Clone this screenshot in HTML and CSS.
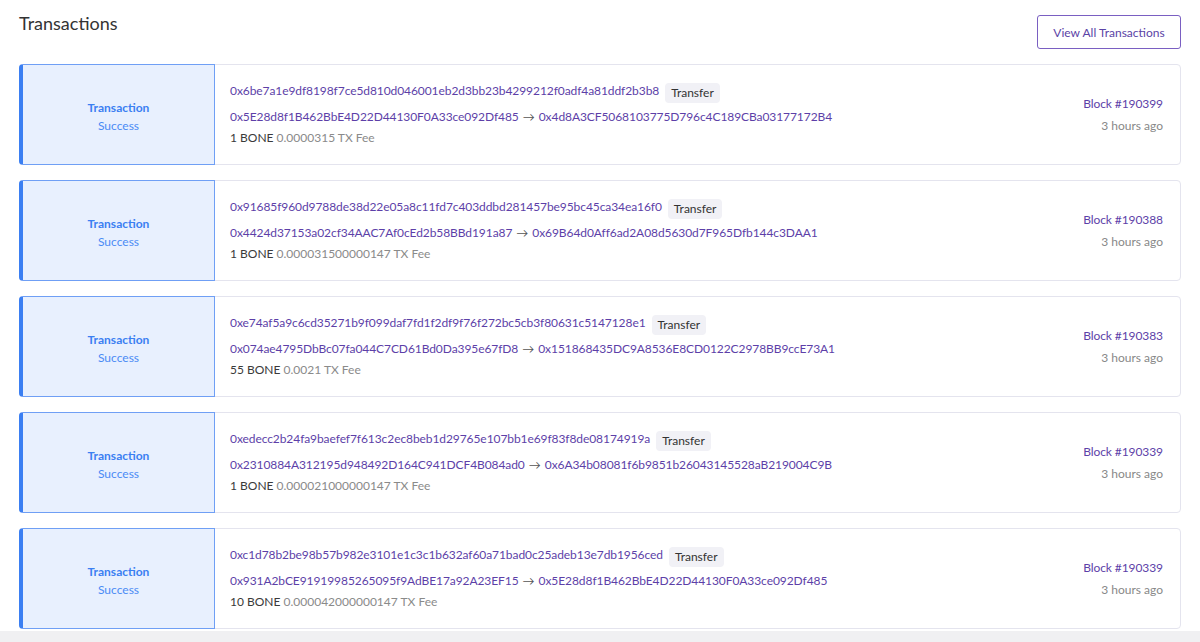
FILE: index.html
```html
<!DOCTYPE html>
<html lang="en">
<head>
    <meta charset="UTF-8">
    <meta name="viewport" content="width=device-width, initial-scale=1.0">
    <title>Transactions</title>
    <link rel="stylesheet" href="styles.css">
</head>
<body>
    <div class="page">
        <div class="header">
            <h2 class="title">Transactions</h2>
            <a class="view-all" href="#">View All Transactions</a>
        </div>

        <div class="tx-list">
            <div class="tx-card">
                <div class="tx-status">
                    <span class="status-type">Transaction</span>
                    <span class="status-result">Success</span>
                </div>
                <div class="tx-info">
                    <div class="tx-hash-line">
                        <a class="link" href="#">0x6be7a1e9df8198f7ce5d810d046001eb2d3bb23b4299212f0adf4a81ddf2b3b8</a>
                        <span class="badge">Transfer</span>
                    </div>
                    <div class="tx-addr-line">
                        <a class="link" href="#">0x5E28d8f1B462BbE4D22D44130F0A33ce092Df485</a>
                        <span class="arrow">&rarr;</span>
                        <a class="link" href="#">0x4d8A3CF5068103775D796c4C189CBa03177172B4</a>
                    </div>
                    <div class="tx-fee-line">
                        <span class="amount">1 BONE</span>
                        <span class="fee">0.0000315 TX Fee</span>
                    </div>
                </div>
                <div class="tx-meta">
                    <a class="link" href="#">Block #190399</a>
                    <span class="time">3 hours ago</span>
                </div>
            </div>

            <div class="tx-card">
                <div class="tx-status">
                    <span class="status-type">Transaction</span>
                    <span class="status-result">Success</span>
                </div>
                <div class="tx-info">
                    <div class="tx-hash-line">
                        <a class="link" href="#">0x91685f960d9788de38d22e05a8c11fd7c403ddbd281457be95bc45ca34ea16f0</a>
                        <span class="badge">Transfer</span>
                    </div>
                    <div class="tx-addr-line">
                        <a class="link" href="#">0x4424d37153a02cf34AAC7Af0cEd2b58BBd191a87</a>
                        <span class="arrow">&rarr;</span>
                        <a class="link" href="#">0x69B64d0Aff6ad2A08d5630d7F965Dfb144c3DAA1</a>
                    </div>
                    <div class="tx-fee-line">
                        <span class="amount">1 BONE</span>
                        <span class="fee">0.000031500000147 TX Fee</span>
                    </div>
                </div>
                <div class="tx-meta">
                    <a class="link" href="#">Block #190388</a>
                    <span class="time">3 hours ago</span>
                </div>
            </div>

            <div class="tx-card">
                <div class="tx-status">
                    <span class="status-type">Transaction</span>
                    <span class="status-result">Success</span>
                </div>
                <div class="tx-info">
                    <div class="tx-hash-line">
                        <a class="link" href="#">0xe74af5a9c6cd35271b9f099daf7fd1f2df9f76f272bc5cb3f80631c5147128e1</a>
                        <span class="badge">Transfer</span>
                    </div>
                    <div class="tx-addr-line">
                        <a class="link" href="#">0x074ae4795DbBc07fa044C7CD61Bd0Da395e67fD8</a>
                        <span class="arrow">&rarr;</span>
                        <a class="link" href="#">0x151868435DC9A8536E8CD0122C2978BB9ccE73A1</a>
                    </div>
                    <div class="tx-fee-line">
                        <span class="amount">55 BONE</span>
                        <span class="fee">0.0021 TX Fee</span>
                    </div>
                </div>
                <div class="tx-meta">
                    <a class="link" href="#">Block #190383</a>
                    <span class="time">3 hours ago</span>
                </div>
            </div>

            <div class="tx-card">
                <div class="tx-status">
                    <span class="status-type">Transaction</span>
                    <span class="status-result">Success</span>
                </div>
                <div class="tx-info">
                    <div class="tx-hash-line">
                        <a class="link" href="#">0xedecc2b24fa9baefef7f613c2ec8beb1d29765e107bb1e69f83f8de08174919a</a>
                        <span class="badge">Transfer</span>
                    </div>
                    <div class="tx-addr-line">
                        <a class="link" href="#">0x2310884A312195d948492D164C941DCF4B084ad0</a>
                        <span class="arrow">&rarr;</span>
                        <a class="link" href="#">0x6A34b08081f6b9851b26043145528aB219004C9B</a>
                    </div>
                    <div class="tx-fee-line">
                        <span class="amount">1 BONE</span>
                        <span class="fee">0.000021000000147 TX Fee</span>
                    </div>
                </div>
                <div class="tx-meta">
                    <a class="link" href="#">Block #190339</a>
                    <span class="time">3 hours ago</span>
                </div>
            </div>

            <div class="tx-card">
                <div class="tx-status">
                    <span class="status-type">Transaction</span>
                    <span class="status-result">Success</span>
                </div>
                <div class="tx-info">
                    <div class="tx-hash-line">
                        <a class="link" href="#">0xc1d78b2be98b57b982e3101e1c3c1b632af60a71bad0c25adeb13e7db1956ced</a>
                        <span class="badge">Transfer</span>
                    </div>
                    <div class="tx-addr-line">
                        <a class="link" href="#">0x931A2bCE91919985265095f9AdBE17a92A23EF15</a>
                        <span class="arrow">&rarr;</span>
                        <a class="link" href="#">0x5E28d8f1B462BbE4D22D44130F0A33ce092Df485</a>
                    </div>
                    <div class="tx-fee-line">
                        <span class="amount">10 BONE</span>
                        <span class="fee">0.000042000000147 TX Fee</span>
                    </div>
                </div>
                <div class="tx-meta">
                    <a class="link" href="#">Block #190339</a>
                    <span class="time">3 hours ago</span>
                </div>
            </div>
        </div>
    </div>
</body>
</html>
```

FILE: styles.css
```css
body {
    margin: 0;
    font-family: 'Lato', 'Noto Sans', sans-serif;
    background-color: #f0f0f2;
    color: #333;
    font-size: 12px;
}
.page {
    background-color: #fff;
    padding: 15px 19px 2px 19px;
    box-shadow: 0 6px 12px rgba(0, 0, 0, 0.05);
}
.header {
    display: flex;
    justify-content: space-between;
    align-items: flex-start;
}
.title {
    margin: 0;
    font-size: 18px;
    font-weight: 400;
    color: #333;
    line-height: 17px;
}
.view-all {
    display: flex;
    align-items: center;
    justify-content: center;
    width: 142px;
    height: 32px;
    border: 1px solid #7a5fc2;
    border-radius: 3px;
    color: #5b43a6;
    text-decoration: none;
    font-size: 12px;
}
.tx-list {
    display: flex;
    flex-direction: column;
    gap: 15px;
    margin-top: 15px;
}
.tx-card {
    display: flex;
    height: 101px;
    border: 1px solid #e4e4ee;
    border-radius: 4px;
    box-sizing: border-box;
}
.tx-status {
    width: 196px;
    height: 101px;
    box-sizing: border-box;
    display: flex;
    flex-direction: column;
    align-items: center;
    justify-content: center;
    gap: 3px;
    padding-top: 4px;
    margin: -1px 0 -1px -1px;
    background-color: #e8f0fe;
    border: 1px solid #6f9ff5;
    border-left: 4px solid #3b7ff2;
    border-radius: 4px 0 0 4px;
}
.status-type {
    color: #3b7ff2;
    font-weight: 700;
}
.status-result {
    color: #4b8bf5;
}
.tx-info {
    flex: 1;
    padding: 18px 0 0 15px;
    display: flex;
    flex-direction: column;
}
.tx-hash-line {
    display: flex;
    align-items: flex-start;
    gap: 6px;
    height: 20px;
    line-height: 16px;
}
.tx-addr-line {
    margin-top: 6px;
    display: flex;
    align-items: center;
    gap: 4px;
    line-height: 16px;
}
.tx-fee-line {
    margin-top: 5px;
    line-height: 16px;
}
.link {
    color: #5d3fa8;
    text-decoration: none;
    letter-spacing: -0.08px;
}
.arrow {
    color: #555;
}
.badge {
    background-color: #f1f1f6;
    border-radius: 4px;
    padding: 0 6px;
    line-height: 20px;
    color: #333;
}
.amount {
    color: #3a3a3a;
}
.fee {
    color: #8a8a8a;
}
.tx-meta {
    display: flex;
    flex-direction: column;
    align-items: flex-end;
    justify-content: center;
    gap: 7px;
    padding-right: 17px;
}
.time {
    color: #888;
}
```
